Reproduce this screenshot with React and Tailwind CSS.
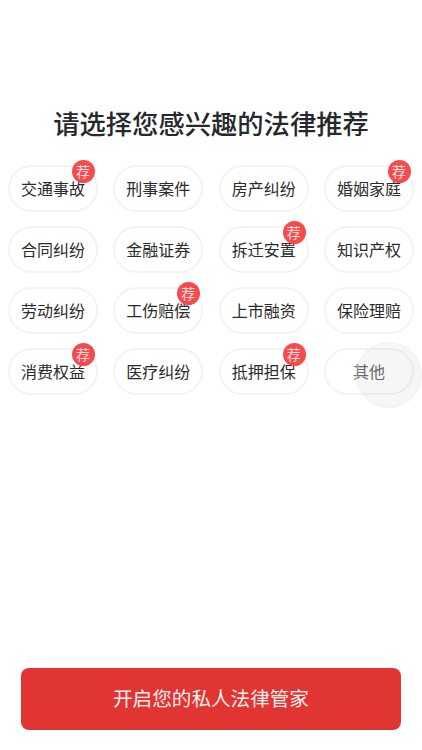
const topics = [
  { name: "交通事故", hot: true },
  { name: "刑事案件" },
  { name: "房产纠纷" },
  { name: "婚姻家庭", hot: true },
  { name: "合同纠纷" },
  { name: "金融证券" },
  { name: "拆迁安置", hot: true },
  { name: "知识产权" },
  { name: "劳动纠纷" },
  { name: "工伤赔偿", hot: true },
  { name: "上市融资" },
  { name: "保险理赔" },
  { name: "消费权益", hot: true },
  { name: "医疗纠纷" },
  { name: "抵押担保", hot: true },
  { name: "其他", muted: true },
];

function Chip({ name, hot, muted }) {
  return (
    <div
      className={`relative flex h-[47px] items-center justify-center rounded-[24px] border-2 border-[#f3f3f3] bg-white pb-[2px] text-[16px] ${
        muted ? "text-[#666666]" : "text-[#2b2b2b]"
      }`}
    >
      {name}
      {hot ? (
        <span className="absolute right-[1px] top-[-7px] flex h-[23px] w-[23px] items-center justify-center rounded-full bg-[#f74a4d] pb-[1px] pr-[1px] text-[14px] text-[#ffdcdc]">
          荐
        </span>
      ) : null}
    </div>
  );
}

function App() {
  return (
    <div className="relative flex h-[750px] w-[422px] flex-col overflow-hidden bg-white font-['Noto_Sans_CJK_SC','Noto_Sans',sans-serif]">
      <h1 className="mt-[104px] text-center text-[26.3px] leading-[38px] font-medium text-[#26282c]">
        请选择您感兴趣的法律推荐
      </h1>

      <div className="mt-[23px] grid grid-cols-[repeat(4,90px)] gap-x-[15.33px] gap-y-[14px] pl-[8px]">
        {topics.map((topic) => (
          <Chip key={topic.name} {...topic} />
        ))}
      </div>

      <button className="mx-[21px] mt-auto mb-[20px] h-[62px] rounded-[8px] bg-[#e03532] pb-[2px] text-[19.6px] text-[#fdeeee]">
        开启您的私人法律管家
      </button>

      <div className="absolute left-[356px] top-[342px] h-[66px] w-[66px] rounded-full border border-[#ececec]/60 bg-[#8c8c8c]/[0.08]" />
    </div>
  );
}

export default App;
